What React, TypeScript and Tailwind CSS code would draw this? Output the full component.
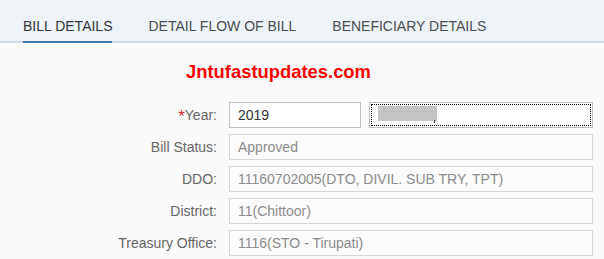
const tabs = ['BILL DETAILS', 'DETAIL FLOW OF BILL', 'BENEFICIARY DETAILS'];

const rows = [
  { label: 'Bill Status:', value: 'Approved' },
  { label: 'DDO:', value: '11160702005(DTO, DIVIL. SUB TRY, TPT)' },
  { label: 'District:', value: '11(Chittoor)' },
  { label: 'Treasury Office:', value: '1116(STO - Tirupati)' },
];

function Label({ children }: { children: React.ReactNode }) {
  return (
    <div className="w-[218px] shrink-0 text-right text-[14px] text-[#666666] pr-[1px]">
      {children}
    </div>
  );
}

export default function App() {
  return (
    <div
      className="w-[604px] h-[259px] overflow-hidden bg-[#fafafa]"
      style={{ fontFamily: '"Liberation Sans", Arial, sans-serif' }}
    >
      <div className="flex gap-[36px] px-[23px] h-[43px] bg-[#eef3f8] border-b-2 border-[#cddbea]">
        {tabs.map((t, i) => (
          <div
            key={t}
            className={`pt-[18px] h-[43px] -mb-[2px] border-b-2 text-[14px] leading-4 ${
              i === 0 ? 'border-[#3d7ab1] text-[#32363a]' : 'border-transparent text-[#4a4d50]'
            }`}
          >
            {t}
          </div>
        ))}
      </div>

      <div className="pt-[19px]">
        <div className="pl-[186px] text-[18.4px] leading-[20px] font-bold text-[#ff0000]">
          Jntufastupdates.com
        </div>

        <div className="mt-[20px] flex flex-col gap-[6px]">
          <div className="flex items-center h-[26px]">
            <Label>
              <span className="text-[17px] leading-none text-[#d9262c] align-[-2px]">*</span>Year:
            </Label>
            <div className="ml-[11px] w-[132px] h-[26px] flex items-center pl-[8px] bg-white border border-[#bfbfbf] text-[14px] text-[#333333]">
              2019
            </div>
            <div className="relative ml-[8px] w-[224px] h-[26px] bg-white border border-[#bfbfbf] outline-1 outline-dotted outline-black -outline-offset-[3px] pl-[8px] pt-[3px]">
              <div className="w-[59px] h-[15px] bg-[#c4c4c4]" />
              <div className="absolute left-[64px] top-[17px] w-[1px] h-[3px] bg-[#333]" />
            </div>
          </div>
          {rows.map((r) => (
            <div key={r.label} className="flex items-center h-[26px]">
              <Label>{r.label}</Label>
              <div className="ml-[11px] w-[364px] h-[26px] flex items-center pl-[8px] bg-[#fbfbfb] border border-[#d9d9d9] text-[14px] text-[#8c8c8c]">
                {r.value}
              </div>
            </div>
          ))}
        </div>
      </div>
    </div>
  );
}
